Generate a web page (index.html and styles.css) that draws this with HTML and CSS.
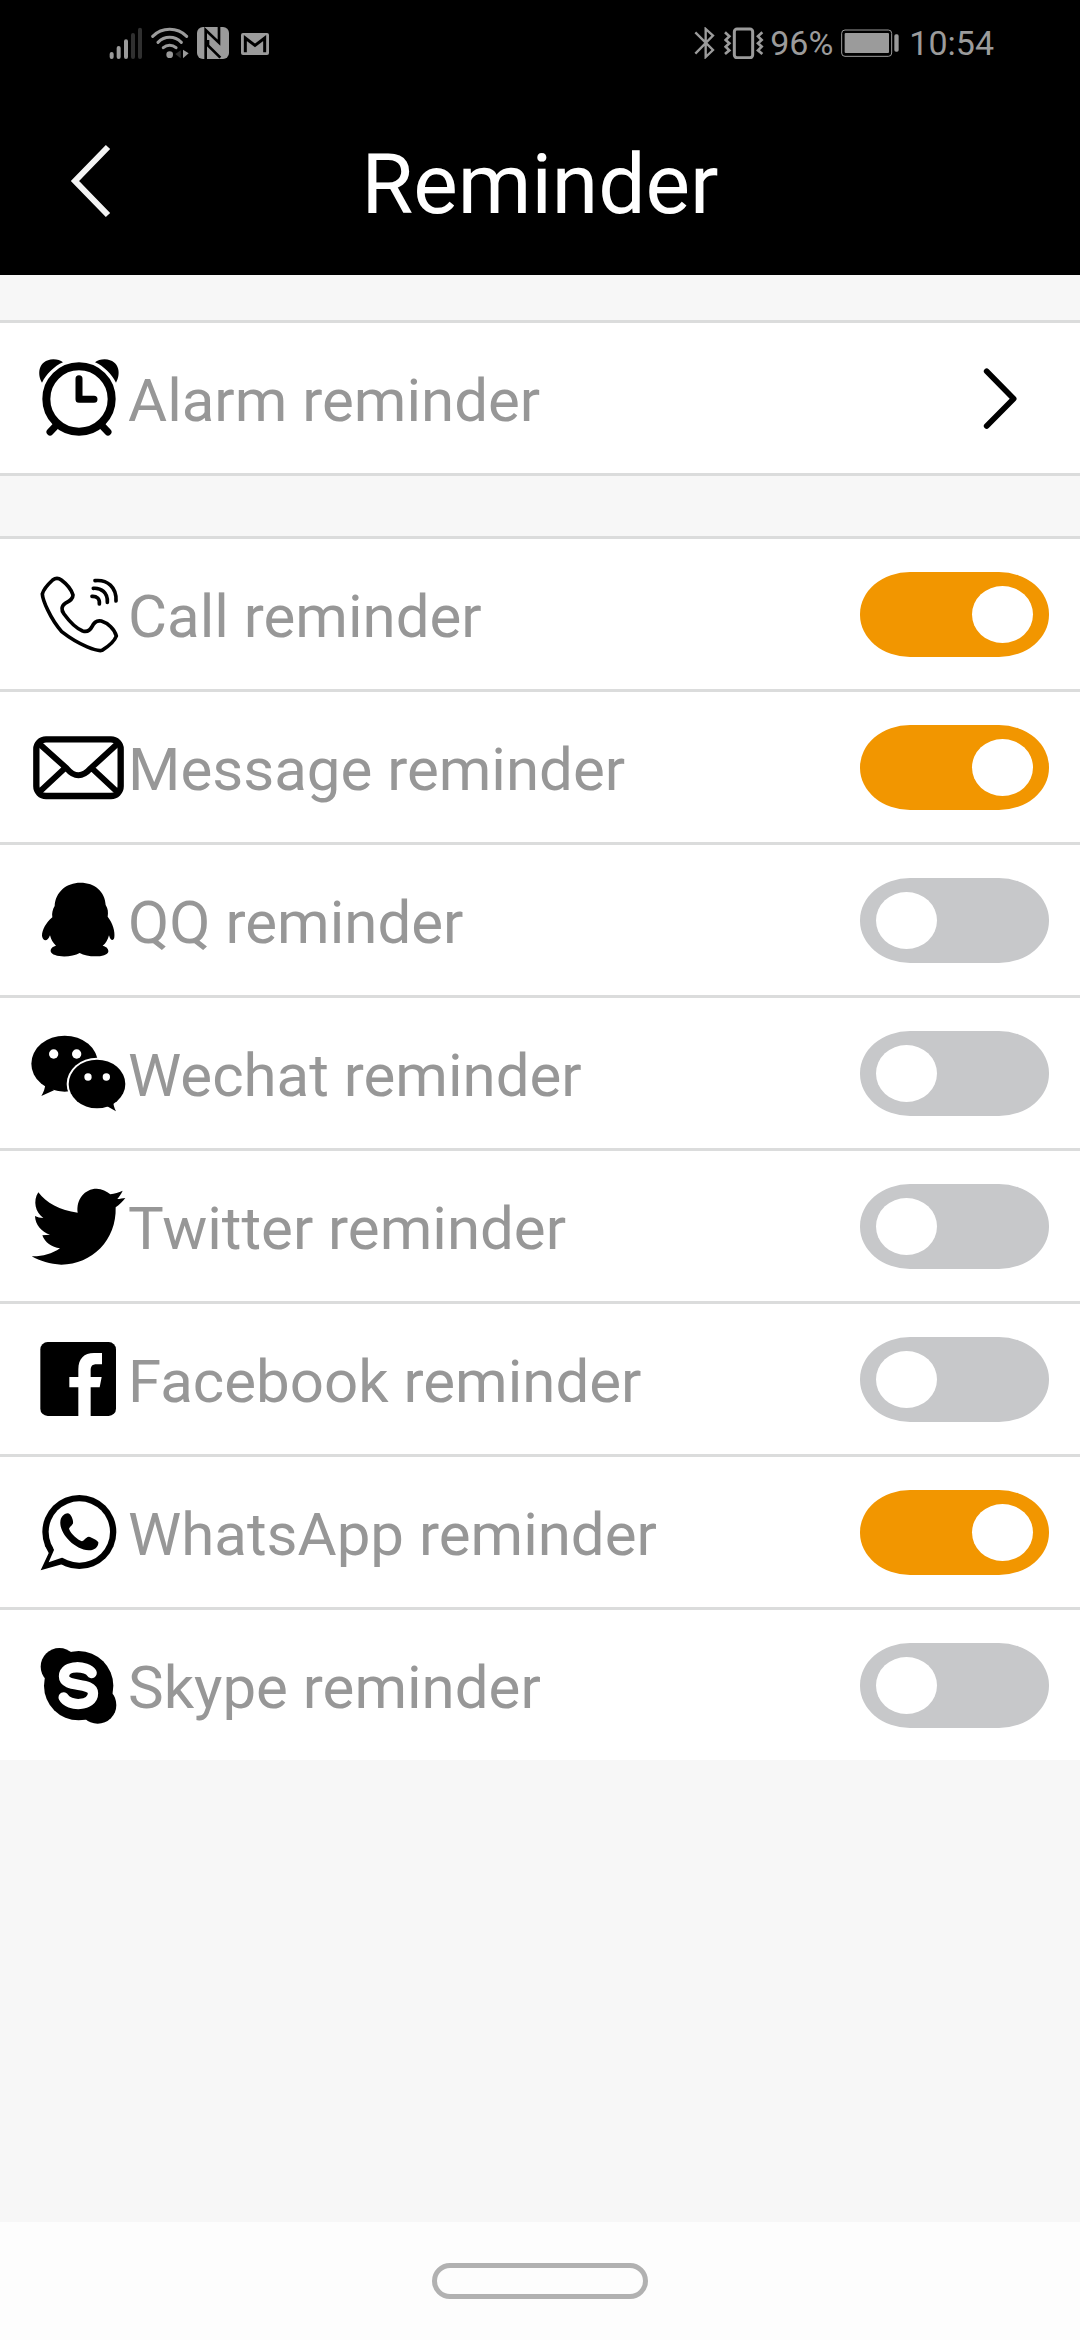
FILE: index.html
```html
<!DOCTYPE html>
<html lang="en">

<head>
    <meta charset="utf-8">
    <meta name="viewport" content="width=device-width">
    <title>Reminder</title>
    <link rel="stylesheet" href="styles.css">
</head>

<body>
<!-- status bar -->
<div class="status">
    <div class="status-left">
        <svg width="34" height="32" viewBox="57 51 102 96" stroke="#9b9b9b" stroke-width="12" stroke-linecap="round">
            <path d="M65 132V141M86 114V141M108 94V141"/>
            <path d="M129 75V141M150 59V141" stroke="#303030"/>
        </svg>
        <svg width="38" height="32" viewBox="183 51 114 96" fill="none" stroke="#9b9b9b" stroke-width="9" stroke-linecap="round">
            <path d="M188 79C216 51 262 51 290 79M204 97C224 77 254 77 274 97M220 113C231 103 247 103 258 113"/>
            <circle cx="239" cy="134" r="10" fill="#9b9b9b" stroke="none"/>
            <path d="M272 121V145L256 132z" fill="#303030" stroke="none"/>
            <path d="M279 119V145L296 130z" fill="#9b9b9b" stroke="none"/>
        </svg>
        <svg width="32" height="32" viewBox="321 51 96 96">
            <rect x="321" y="51" width="96" height="96" rx="18" fill="#9b9b9b"/>
            <path d="M347 147V60L387 98V51M354 90V106L391 143" fill="none" stroke="#000" stroke-width="8"/>
        </svg>
        <svg width="32" height="32" viewBox="441 51 96 96">
            <rect x="453" y="69" width="84" height="66" rx="6" fill="#9b9b9b"/>
            <path d="M466 127V84L495 106L524 84V127" fill="none" stroke="#000" stroke-width="9"/>
        </svg>
    </div>
    <div class="status-right">
        <div class="status-mode">
            <svg width="24" height="32" viewBox="36 51 72 96" fill="none" stroke="#9b9b9b" stroke-width="7">
                <path d="M40 67L93 120L71 141V57L93 77L40 131"/>
            </svg>
            <svg width="40" height="32" viewBox="132 51 120 96" fill="none" stroke="#9b9b9b" stroke-width="8">
                <rect x="163" y="57" width="55" height="86" rx="8" stroke-width="9"/>
                <path d="M135 67L148 79L137 90L148 100L137 110L148 121L135 132"/>
                <path d="M247 67L234 79L245 90L234 100L245 110L234 121L247 132"/>
            </svg>
            <span>96%</span>
        </div>
        <svg width="60" height="32" viewBox="483 53 180 96">
            <rect x="485" y="62" width="150" height="79" rx="10" fill="none" stroke="#9b9b9b" stroke-width="3"/>
            <rect x="494" y="71" width="133" height="60" rx="3" fill="#9b9b9b"/>
            <rect x="643" y="75" width="13" height="52" rx="5" fill="#9b9b9b"/>
        </svg>
        <span>10:54</span>
    </div>
</div>

<header class="header">
    <button class="back" type="button" aria-label="Back">
        <svg width="48" height="80" viewBox="0 0 48 80" fill="none" stroke="#f4f4f4" stroke-width="6">
            <path d="M44 6L11 40L44 74"/>
        </svg>
    </button>
    <h1 class="title">Reminder</h1>
</header>

<main class="main">
    <div class="group group-link">
        <a class="row" href="#alarm">
            <svg class="icon" viewBox="84 114 300 300">
                <circle cx="237" cy="267" r="98" fill="none" stroke="#000" stroke-width="24"/>
                <path d="M237 206V268H282M170 345L150 366M304 345L324 366" fill="none" stroke="#000" stroke-width="21" stroke-linecap="round" stroke-linejoin="round"/>
                <path d="M126 218C112 196 112 150 160 148C172 148 182 151 189 157C163 168 138 194 126 218z"/>
                <path d="M348 218C362 196 362 150 314 148C302 148 292 151 285 157C311 168 336 194 348 218z"/>
            </svg>
            <span class="name">Alarm reminder</span>
            <svg class="chevron" viewBox="339 168 288 192" fill="none" stroke="#000" stroke-width="17" stroke-linecap="round" stroke-linejoin="round">
                <path d="M440 184L521 266L440 348"/>
            </svg>
        </a>
    </div>

    <div class="group">
        <label class="row">
            <svg class="icon" viewBox="84 42 300 300" fill="none" stroke="#000" stroke-width="11" stroke-linecap="round" stroke-linejoin="round">
                <path d="M158 90Q171 80 184 90C200 102 214 118 219 135C219 148 208 153 196 160C184 168 183 180 192 192C208 214 226 234 248 243C262 247 270 242 276 230C282 216 290 210 304 213C324 219 344 238 349 258C344 272 324 290 306 301C294 305 240 288 185 245C150 205 128 150 127 132C130 120 146 101 158 90z"/>
                <path d="M285 92C322 88 350 112 348 153M280 115C303 113 324 128 322 157M276 139C290 138 300 146 298 162"/>
            </svg>
            <span class="name">Call reminder</span>
            <input class="switch" type="checkbox" checked>
        </label>
        <label class="row">
            <svg class="icon" viewBox="84 501 300 300" fill="none" stroke="#000" stroke-width="19">
                <rect x="109" y="568" width="253" height="170" rx="29"/>
                <path d="M116 580L200 655Q235 697 272 655L354 580M116 728L194 655M354 728L276 655" stroke-width="18"/>
            </svg>
            <span class="name">Message reminder</span>
            <input class="switch" type="checkbox" checked>
        </label>
        <label class="row">
            <svg class="icon" viewBox="84 60 300 300">
                <path d="M241 98C285 98 315 125 317 165C324 175 325 188 323 200C338 218 346 245 343 262C341 274 332 274 327 256C323 270 318 280 308 287C322 291 326 298 325 305C322 322 265 324 239 309C214 324 156 323 152 304C152 296 156 290 168 287C158 278 154 270 150 256C143 275 130 276 126 258C126 240 138 218 157 202C155 190 158 178 164 168C166 125 200 98 241 98z"/>
            </svg>
            <span class="name">QQ reminder</span>
            <input class="switch" type="checkbox">
        </label>
        <label class="row">
            <svg class="icon" viewBox="84 519 300 300">
                <ellipse cx="194" cy="641" rx="100" ry="84"/>
                <path d="M136 700C136 715 130 728 124 738L162 721z"/>
                <ellipse cx="291" cy="702" rx="91" ry="79" fill="#fff"/>
                <ellipse cx="291" cy="702" rx="85" ry="73"/>
                <path d="M340 750C339 763 343 774 348 784L320 768z"/>
                <g fill="#fff">
                    <circle cx="161" cy="612" r="14"/>
                    <circle cx="230" cy="612" r="14"/>
                    <circle cx="264" cy="681" r="11"/>
                    <circle cx="319" cy="681" r="11"/>
                </g>
            </svg>
            <span class="name">Wechat reminder</span>
            <input class="switch" type="checkbox">
        </label>
        <label class="row">
            <svg class="icon" viewBox="84 48 300 300">
                <path d="M115 97C138 128 180 152 233 158C228 118 254 86 290 86C306 87 320 93 331 103C344 101 356 97 368 92C363 102 358 110 352 117C360 117 368 115 376 114C370 122 358 135 347 142C350 240 276 314 184 314C150 313 120 303 95 289C125 290 155 282 180 265C155 262 134 247 127 226L150 224C124 216 106 194 105 168C112 172 121 174 130 174C106 158 98 122 115 97z"/>
            </svg>
            <span class="name">Twitter reminder</span>
            <input class="switch" type="checkbox">
        </label>
        <label class="row">
            <svg class="icon" viewBox="84 507 300 300">
                <rect x="121" y="546" width="227" height="222" rx="22"/>
                <path fill="#fff" d="M235 769V682H208V651H235V628C235 596 252 579 282 579H306V613H290C276 613 272 619 272 632V651H305L299 682H272V769z"/>
            </svg>
            <span class="name">Facebook reminder</span>
            <input class="switch" type="checkbox">
        </label>
        <label class="row">
            <svg class="icon" viewBox="84 36 300 300">
                <circle cx="238" cy="186" r="111"/>
                <path d="M134 225L148 245L122 301L186 283L210 290z"/>
                <circle cx="238" cy="186" r="92" fill="#fff"/>
                <path d="M160 232L162 240L146 277L190 262L200 268L210 240z" fill="#fff"/>
                <path d="M204 130C216 133 222 158 218 162C214 168 208 172 207 176C214 194 232 208 246 214C254 210 260 200 266 200C276 202 294 212 295 217C296 232 282 242 266 241C222 238 178 190 181 155C182 142 190 131 204 130z"/>
            </svg>
            <span class="name">WhatsApp reminder</span>
            <input class="switch" type="checkbox" checked>
        </label>
        <label class="row">
            <svg class="icon" viewBox="84 495 300 300">
                <circle cx="236" cy="647" r="104"/>
                <circle cx="178" cy="590" r="56"/>
                <circle cx="293" cy="705" r="56"/>
                <path d="M275 609C262 587 192 582 192 619C192 656 279 633 279 670C279 710 206 711 191 682" fill="none" stroke="#fff" stroke-width="31" stroke-linecap="round"/>
            </svg>
            <span class="name">Skype reminder</span>
            <input class="switch" type="checkbox">
        </label>
    </div>
</main>

<!-- system navigation -->
<nav class="navbar">
    <button class="home" type="button" aria-label="Home"></button>
</nav>
</body>

</html>
```

FILE: styles.css
```css
* {
    margin: 0;
    padding: 0;
    box-sizing: border-box;
}
body {
    display: flex;
    flex-direction: column;
    min-height: 100vh;
    background: #f7f7f7;
    font-family: Roboto, sans-serif;
}
svg {
    display: block;
    flex-shrink: 0;
}
.status {
    display: flex;
    justify-content: space-between;
    align-items: center;
    height: 86px;
    padding: 0 86px 0 109px;
    background: #000;
    color: #9b9b9b;
    font-size: 34px;
    line-height: 40px;
}
.status-left,
.status-right {
    display: flex;
    align-items: center;
    gap: 8px;
}
.status-mode {
    display: flex;
    align-items: center;
    gap: 6px;
}
.header {
    display: grid;
    grid-template-columns: 180px 1fr 180px;
    align-items: center;
    height: 189px;
    background: #000;
}
.back {
    width: 180px;
    height: 120px;
    padding-left: 64px;
    background: none;
    border: 0;
}
.title {
    padding-top: 8px;
    color: #fff;
    font-size: 84px;
    font-weight: 400;
    line-height: 100px;
    text-align: center;
}
.main {
    flex: 1;
    padding-top: 45px;
}
.group {
    border-top: 3px solid #dbdcdc;
    background: #fff;
}
.group-link {
    margin-bottom: 60px;
    border-bottom: 3px solid #dbdcdc;
}
.row {
    display: flex;
    align-items: center;
    height: 150px;
    padding: 0 31px 0 28px;
    color: #979797;
    text-decoration: none;
}
.row + .row {
    height: 153px;
    border-top: 3px solid #dbdcdc;
}
.icon {
    width: 100px;
    height: 100px;
}
.name {
    flex: 1;
    padding-top: 5px;
    font-size: 60px;
    line-height: 70px;
}
.chevron {
    width: 96px;
    height: 64px;
}
.switch {
    appearance: none;
    display: flex;
    align-items: center;
    width: 189px;
    height: 85px;
    padding: 0 16px;
    border-radius: 50px / 42px;
    background: #c7c8ca;
}
.switch::before {
    content: "";
    width: 61px;
    height: 57px;
    border-radius: 50%;
    background: #fff;
}
.switch:checked {
    justify-content: flex-end;
    background: #f29600;
}
.navbar {
    display: flex;
    justify-content: center;
    align-items: center;
    height: 118px;
    background: #fdfdfd;
}
.home {
    width: 216px;
    height: 36px;
    border: 5px solid #b1b1b1;
    border-radius: 18px;
    background: none;
}
```
